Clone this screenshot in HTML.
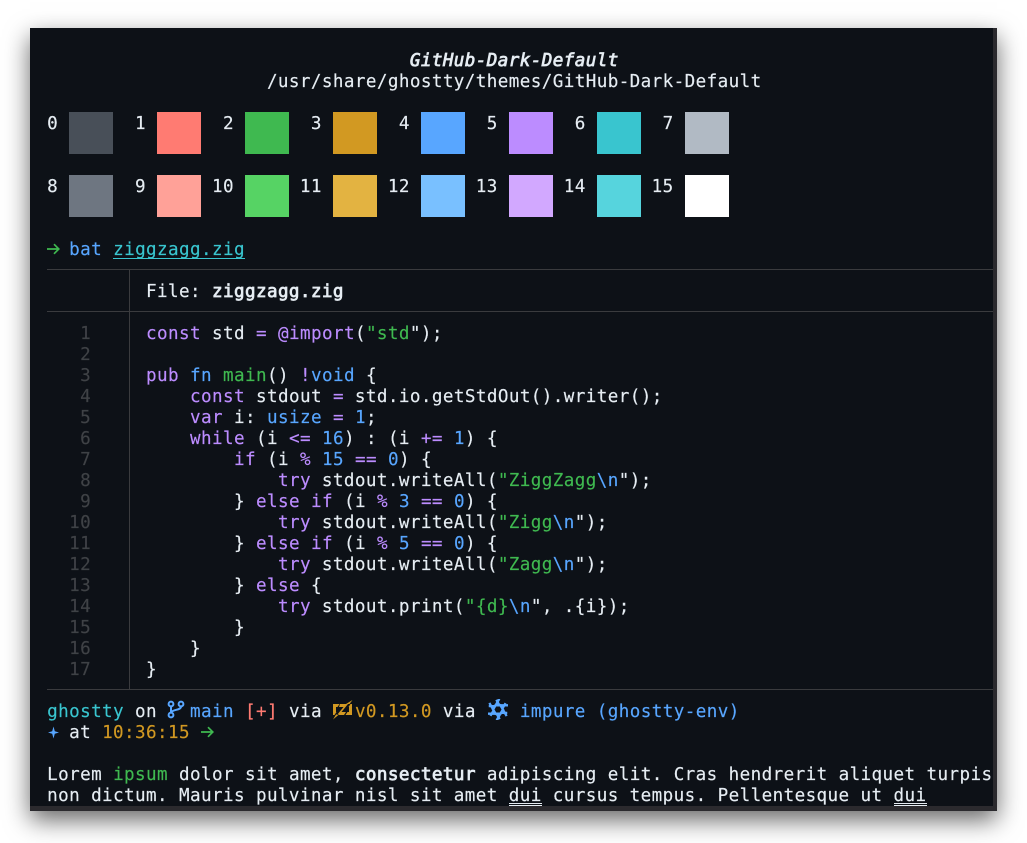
<!DOCTYPE html>
<html><head><meta charset="utf-8">
<style>
html,body{margin:0;padding:0;background:#fff;width:1027px;height:843px;overflow:hidden}
#w{position:absolute;left:30px;top:28px;width:967px;height:783px;background:#0d1117;box-shadow:0 9px 23px rgba(0,0,0,.6);overflow:hidden}
#r{position:absolute;left:963px;top:0;width:4px;height:783px;background:#2b2a2e}
#b{position:absolute;left:0;top:778px;width:967px;height:5px;background:#2b2a2e}
.l{position:absolute;left:17.1px;width:946px;height:21px;font:17.6px/21px "DejaVu Sans Mono",monospace;letter-spacing:.4px;color:#e6edf3;white-space:pre;overflow:hidden;-webkit-text-stroke:.15px currentColor}
.s{position:absolute;width:44px;height:42px}
.h{position:absolute;left:17px;width:946px;height:1px;background:#3a3b3e}
.v{position:absolute;left:99px;top:241px;width:1px;height:421px;background:#3a3b3e}
.u{position:absolute;height:1px;background:#e6edf3}
.n{color:#3f4246}
b{font-weight:normal;-webkit-text-stroke:.75px currentColor}
i{font-style:normal;color:#bc8cff}
u{text-decoration:none;color:#58a6ff}
em{font-style:normal;color:#3fb950}
svg{position:absolute}
</style></head><body>
<div id="w">
<div class="l" style="top:23px"><b style="font-style:italic">                                 GitHub-Dark-Default</b></div>
<div class="l" style="top:44px">                    /usr/share/ghostty/themes/GitHub-Dark-Default</div>
<div class="l" style="top:86px">0       1       2       3       4       5       6       7</div>
<div class="l" style="top:149px">8       9      10      11      12      13      14      15</div>
<div class="s" style="left:39px;top:84px;background:#484f58"></div>
<div class="s" style="left:127px;top:84px;background:#ff7b72"></div>
<div class="s" style="left:215px;top:84px;background:#3fb950"></div>
<div class="s" style="left:303px;top:84px;background:#d29922"></div>
<div class="s" style="left:391px;top:84px;background:#58a6ff"></div>
<div class="s" style="left:479px;top:84px;background:#bc8cff"></div>
<div class="s" style="left:567px;top:84px;background:#39c5cf"></div>
<div class="s" style="left:655px;top:84px;background:#b1bac4"></div>
<div class="s" style="left:39px;top:147px;background:#6e7681"></div>
<div class="s" style="left:127px;top:147px;background:#ffa198"></div>
<div class="s" style="left:215px;top:147px;background:#56d364"></div>
<div class="s" style="left:303px;top:147px;background:#e3b341"></div>
<div class="s" style="left:391px;top:147px;background:#79c0ff"></div>
<div class="s" style="left:479px;top:147px;background:#d2a8ff"></div>
<div class="s" style="left:567px;top:147px;background:#56d4dd"></div>
<div class="s" style="left:655px;top:147px;background:#fff"></div>
<svg style="left:17px;top:213px" width="13" height="16" viewBox="0 0 13 16" fill="none" stroke="#3fb950" stroke-width="1.7"><path d="M0 8H11.5M7 3.2L11.8 8L7 12.8"/></svg>
<div class="l" style="top:212px">  <u>bat</u> <span style="color:#39c5cf">ziggzagg.zig</span></div>
<div class="u" style="left:83px;top:230px;width:132px;background:#39c5cf"></div>
<div class="h" style="top:241px"></div>
<div class="h" style="top:283px"></div>
<div class="h" style="top:661px"></div>
<div class="v"></div>
<div class="l" style="top:254px">         File: <b>ziggzagg.zig</b></div>
<div class="l" style="top:296px"><span class="n">   1</span>     <i>const</i> std <i>=</i> <i>@import</i>(<em>"std</em>");</div>
<div class="l" style="top:317px"><span class="n">   2</span></div>
<div class="l" style="top:338px"><span class="n">   3</span>     <i>pub</i> <u>fn</u> <em>main</em>() <i>!</i><u>void</u> {</div>
<div class="l" style="top:359px"><span class="n">   4</span>         <i>const</i> stdout <i>=</i> std.io.getStdOut().writer();</div>
<div class="l" style="top:380px"><span class="n">   5</span>         <i>var</i> i: <u>usize</u> <i>=</i> <u>1</u>;</div>
<div class="l" style="top:401px"><span class="n">   6</span>         <i>while</i> (i <i>&lt;=</i> <u>16</u>) : (i <i>+=</i> <u>1</u>) {</div>
<div class="l" style="top:422px"><span class="n">   7</span>             <i>if</i> (i <i>%</i> <u>15</u> <i>==</i> <u>0</u>) {</div>
<div class="l" style="top:443px"><span class="n">   8</span>                 <i>try</i> stdout.writeAll(<em>"ZiggZagg</em><u>\n</u>");</div>
<div class="l" style="top:464px"><span class="n">   9</span>             } <i>else</i> <i>if</i> (i <i>%</i> <u>3</u> <i>==</i> <u>0</u>) {</div>
<div class="l" style="top:485px"><span class="n">  10</span>                 <i>try</i> stdout.writeAll(<em>"Zigg</em><u>\n</u>");</div>
<div class="l" style="top:506px"><span class="n">  11</span>             } <i>else</i> <i>if</i> (i <i>%</i> <u>5</u> <i>==</i> <u>0</u>) {</div>
<div class="l" style="top:527px"><span class="n">  12</span>                 <i>try</i> stdout.writeAll(<em>"Zagg</em><u>\n</u>");</div>
<div class="l" style="top:548px"><span class="n">  13</span>             } <i>else</i> {</div>
<div class="l" style="top:569px"><span class="n">  14</span>                 <i>try</i> stdout.print(<em>"{d}</em><u>\n</u>", .{i});</div>
<div class="l" style="top:590px"><span class="n">  15</span>             }</div>
<div class="l" style="top:611px"><span class="n">  16</span>         }</div>
<div class="l" style="top:632px"><span class="n">  17</span>     }</div>
<div class="l" style="top:674px"><span style="color:#39c5cf">ghostty</span> on   <u>main</u> <span style="color:#ff7b72">[+]</span> via   <span style="color:#d29922">v0.13.0</span> via    <u>impure (ghostty-env)</u></div>
<svg style="left:137px;top:671px" width="18" height="21" viewBox="0 0 18 21" fill="none" stroke="#58a6ff" stroke-width="2"><circle cx="4" cy="5" r="2.4"/><circle cx="4" cy="16" r="2.4"/><circle cx="14" cy="5" r="2.4"/><path d="M4 7.5V13.5M14 7.5C14 11.5 6 10 4 13.5"/></svg>
<svg style="left:303px;top:672px" width="20" height="20" viewBox="0 0 20 20" fill="#d29922"><path d="M0 4H6.5L4.5 7H3V12H3.5L1.5 15H0ZM19 4V15H12.5L14.5 12H16V7H15.5L17.5 4ZM7 4H15L8.5 12H13L11 15H4L10.5 7H6ZM19.5 0L13 4H16.5ZM0 19.5L6 14.5H3Z"/></svg>
<svg style="left:457px;top:671px" width="22" height="21" viewBox="-11 -10.5 22 21" fill="none" stroke="#58a6ff" stroke-width="2.3"><g id="sf"><path d="M-3.5 -4.2H10M-1.7 -9.7L1.5 -4.2"/></g><use href="#sf" transform="rotate(60)"/><use href="#sf" transform="rotate(120)"/><use href="#sf" transform="rotate(180)"/><use href="#sf" transform="rotate(240)"/><use href="#sf" transform="rotate(300)"/></svg>
<svg style="left:18px;top:698px" width="11" height="13" viewBox="0 0 11 13" fill="#58a6ff"><path d="M5.5 0.5L6.8 5.2L11 6.5L6.8 7.8L5.5 12.5L4.2 7.8L0 6.5L4.2 5.2Z"/></svg>
<div class="l" style="top:695px">  at <span style="color:#d29922">10:36:15</span></div>
<svg style="left:171px;top:696px" width="13" height="16" viewBox="0 0 13 16" fill="none" stroke="#3fb950" stroke-width="1.7"><path d="M0 8H11.5M7 3.2L11.8 8L7 12.8"/></svg>
<div class="l" style="top:737px">Lorem <em>ipsum</em> dolor sit amet, <b>consectetur</b> adipiscing elit. Cras hendrerit aliquet turpis</div>
<div class="l" style="top:758px">non dictum. Mauris pulvinar nisl sit amet dui cursus tempus. Pellentesque ut dui</div>
<div class="u" style="left:479px;top:775px;width:33px"></div>
<div class="u" style="left:479px;top:777px;width:33px"></div>
<div class="u" style="left:864px;top:775px;width:33px"></div>
<div class="u" style="left:864px;top:777px;width:33px"></div>
<div id="r"></div>
<div id="b"></div>
</div>
</body></html>
